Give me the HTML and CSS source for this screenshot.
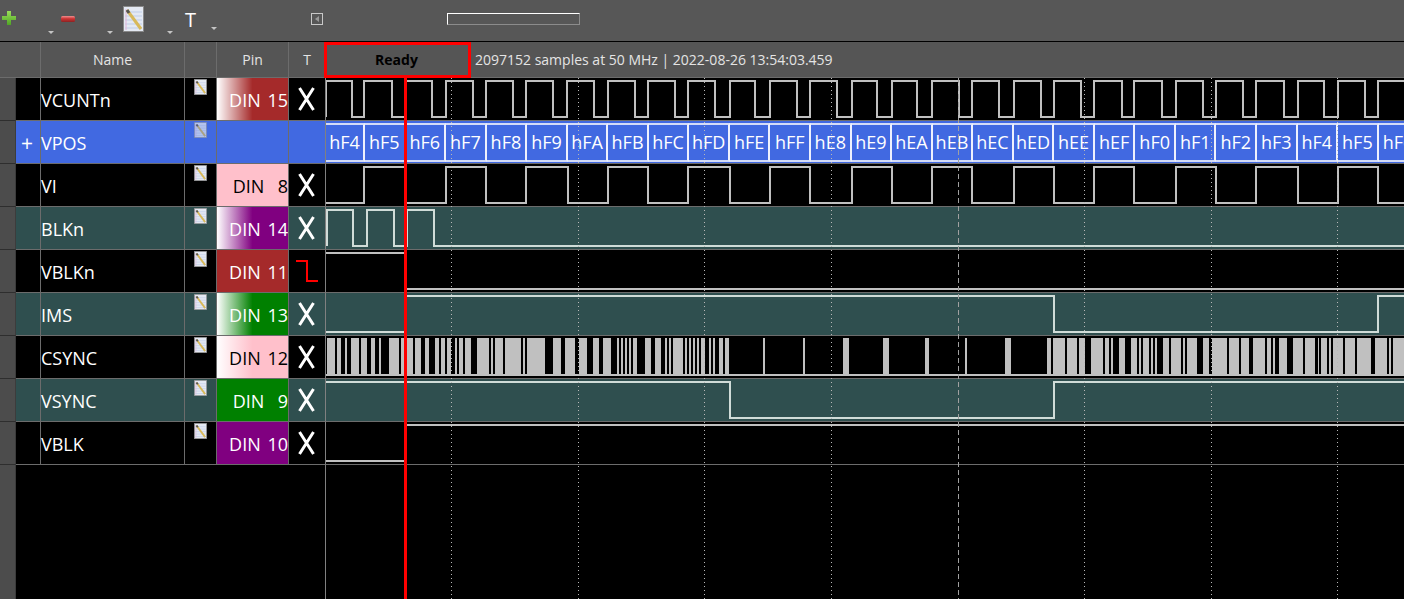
FILE: index.html
```html
<!DOCTYPE html>
<html lang="en">

<head>
    <meta charset="UTF-8">
    <meta name="viewport" content="width=device-width, initial-scale=1.0">
    <title>Logic analyzer</title>
    <link rel="stylesheet" href="styles.css">
</head>

<body>

    <svg class="defs" aria-hidden="true">
        <symbol id="note" viewBox="0 0 21 26">
            <rect x="0.5" y="0.5" width="20" height="25" fill="#e4e9f3" stroke="#8a8a8a" />
            <path d="M2 6H19M2 10H19M2 14H19M2 18H19M2 22H19" stroke="#bfcde8" />
            <path d="M3 3V24" stroke="#e2b6d8" />
            <path d="M4 4L18 23" stroke="#d8b95a" stroke-width="3" />
            <path d="M4 4L6 7" stroke="#555" stroke-width="3" />
        </symbol>
        <symbol id="any" viewBox="0 0 17 24">
            <path d="M1.5 1L15.5 23M15.5 1L1.5 23" fill="none" stroke="#fff" stroke-width="3" />
        </symbol>
        <linearGradient id="add-fill" x1="0" y1="0" x2="0" y2="1">
            <stop offset="0" stop-color="#9adf5a" />
            <stop offset="1" stop-color="#4fa524" />
        </linearGradient>
        <linearGradient id="del-fill" x1="0" y1="0" x2="0" y2="1">
            <stop offset="0" stop-color="#ee9090" />
            <stop offset="0.45" stop-color="#cc3434" />
            <stop offset="1" stop-color="#8c2222" />
        </linearGradient>
    </svg>

    <!-- barra de herramientas -->
    <div class="toolbar">
        <div class="tool tool-add">
            <svg class="icon-add" viewBox="0 0 14 14">
                <path d="M5 0H9V5H14V9H9V14H5V9H0V5H5Z" fill="url(#add-fill)" />
            </svg>
            <span class="caret"></span>
        </div>
        <div class="tool tool-del">
            <svg class="icon-del" viewBox="0 0 14 6">
                <rect width="14" height="6" rx="1.5" fill="url(#del-fill)" />
            </svg>
            <span class="caret"></span>
        </div>
        <div class="tool tool-note">
            <svg class="icon-note">
                <use href="#note" />
            </svg>
            <span class="caret"></span>
        </div>
        <div class="tool tool-text">
            <span class="icon-text">T</span>
            <span class="caret"></span>
        </div>
        <svg class="icon-back" viewBox="0 0 12 12">
            <rect x="0.5" y="0.5" width="11" height="11" fill="none" stroke="#c8c8c8" />
            <path d="M4 6L8 3V9Z" fill="#9a9a9a" />
        </svg>
        <div class="progress"></div>
    </div>

    <!-- cabecera -->
    <div class="row header">
        <div></div>
        <div></div>
        <div class="cell">Name</div>
        <div class="cell"></div>
        <div class="cell">Pin</div>
        <div class="cell">T</div>
        <div class="status">
            <div class="ready">Ready</div>
            <div class="info">2097152 samples at 50 MHz | 2022-08-26 13:54:03.459</div>
        </div>
    </div>

    <div class="tracks">

        <div class="row">
            <div class="strip"></div>
            <div></div>
            <div class="name">VCUNTn</div>
            <div class="note"><svg class="icon-small"><use href="#note" /></svg></div>
            <div class="pin fade-brown">DIN 15</div>
            <div class="trig"><svg class="icon-any"><use href="#any" /></svg></div>
            <div class="wave">
                <svg viewBox="326 0 1078 42">
                    <path d="M326 39V3H352V39H364V3H392V39H405V3H432V39H446V3H473V39H486V3H513V39H526V3H553V39H567V3H594V39H608V3H635V39H648V3H675V39H688V3H715V39H730V3H755V39H770V3H797V39H810V3H837V39H852V3H877V39H892V3H917V39H932V3H959V39H972V3H999V39H1014V3H1041V39H1054V3H1081V39H1094V3H1122V39H1134V3H1162V39H1176V3H1203V39H1216V3H1243V39H1256V3H1284V39H1298V3H1324V39H1338V3H1365V39H1378V3H1406" />
                </svg>
            </div>
        </div>

        <div class="row blue">
            <div class="strip"></div>
            <div class="expand">+</div>
            <div class="name">VPOS</div>
            <div class="note"><svg class="icon-small tinted"><use href="#note" /></svg></div>
            <div class="pin"></div>
            <div class="trig"></div>
            <div class="wave bus">
                <span class="word first">hF4</span>
                <span class="word">hF5</span>
                <span class="word">hF6</span>
                <span class="word">hF7</span>
                <span class="word">hF8</span>
                <span class="word">hF9</span>
                <span class="word">hFA</span>
                <span class="word">hFB</span>
                <span class="word">hFC</span>
                <span class="word">hFD</span>
                <span class="word">hFE</span>
                <span class="word">hFF</span>
                <span class="word">hE8</span>
                <span class="word">hE9</span>
                <span class="word">hEA</span>
                <span class="word">hEB</span>
                <span class="word">hEC</span>
                <span class="word">hED</span>
                <span class="word">hEE</span>
                <span class="word">hEF</span>
                <span class="word">hF0</span>
                <span class="word">hF1</span>
                <span class="word">hF2</span>
                <span class="word">hF3</span>
                <span class="word">hF4</span>
                <span class="word">hF5</span>
                <span class="word">hF6</span>
            </div>
        </div>

        <div class="row">
            <div class="strip"></div>
            <div></div>
            <div class="name">VI</div>
            <div class="note"><svg class="icon-small"><use href="#note" /></svg></div>
            <div class="pin solid-pink">DIN  8</div>
            <div class="trig"><svg class="icon-any"><use href="#any" /></svg></div>
            <div class="wave">
                <svg viewBox="326 0 1078 42">
                    <path d="M326 39H364V3H405V39H446V3H486V39H526V3H568V39H608V3H648V39H688V3H730V39H770V3H810V39H852V3H892V39H932V3H972V39H1014V3H1054V39H1094V3H1134V39H1176V3H1216V39H1256V3H1298V39H1338V3H1378V39H1406" />
                </svg>
            </div>
        </div>

        <div class="row teal">
            <div class="strip"></div>
            <div></div>
            <div class="name">BLKn</div>
            <div class="note"><svg class="icon-small"><use href="#note" /></svg></div>
            <div class="pin fade-purple">DIN 14</div>
            <div class="trig"><svg class="icon-any"><use href="#any" /></svg></div>
            <div class="wave">
                <svg viewBox="326 0 1078 42">
                    <path d="M327 39V3H353V39H367V3H394V39H407V3H434V39H1406" />
                </svg>
            </div>
        </div>

        <div class="row">
            <div class="strip"></div>
            <div></div>
            <div class="name">VBLKn</div>
            <div class="note"><svg class="icon-small"><use href="#note" /></svg></div>
            <div class="pin solid-brown">DIN 11</div>
            <div class="trig">
                <svg class="icon-fall" viewBox="0 0 22 22">
                    <path d="M0 1H11V21H22" fill="none" stroke="#f00" stroke-width="2" />
                </svg>
            </div>
            <div class="wave">
                <svg viewBox="326 0 1078 42">
                    <path d="M326 3H406V39H1406" />
                </svg>
            </div>
        </div>

        <div class="row teal">
            <div class="strip"></div>
            <div></div>
            <div class="name">IMS</div>
            <div class="note"><svg class="icon-small"><use href="#note" /></svg></div>
            <div class="pin fade-green">DIN 13</div>
            <div class="trig"><svg class="icon-any"><use href="#any" /></svg></div>
            <div class="wave">
                <svg viewBox="326 0 1078 42">
                    <path d="M326 39H406V3H1054V39H1378V3H1406" />
                </svg>
            </div>
        </div>

        <div class="row">
            <div class="strip"></div>
            <div></div>
            <div class="name">CSYNC</div>
            <div class="note"><svg class="icon-small"><use href="#note" /></svg></div>
            <div class="pin fade-pink">DIN 12</div>
            <div class="trig"><svg class="icon-any"><use href="#any" /></svg></div>
            <div class="wave">
                <svg viewBox="326 0 1078 42">
                    <path class="bars" d="M326 38H1404V40H326ZM327 2H335V40H327ZM337 2H341V40H337ZM345 2H347V40H345ZM351 2H359V40H351ZM361 2H367V40H361ZM371 2H375V40H371ZM379 2H381V40H379ZM389 2H399V40H389ZM401 2H404V40H401ZM407 2H413V40H407ZM415 2H421V40H415ZM425 2H429V40H425ZM435 2H439V40H435ZM441 2H445V40H441ZM447 2H451V40H447ZM455 2H457V40H455ZM459 2H463V40H459ZM465 2H471V40H465ZM477 2H489V40H477ZM491 2H493V40H491ZM495 2H503V40H495ZM505 2H521V40H505ZM523 2H525V40H523ZM527 2H545V40H527ZM553 2H561V40H553ZM565 2H575V40H565ZM579 2H587V40H579ZM593 2H599V40H593ZM603 2H611V40H603ZM617 2H619V40H617ZM621 2H623V40H621ZM625 2H627V40H625ZM629 2H631V40H629ZM633 2H637V40H633ZM645 2H651V40H645ZM655 2H661V40H655ZM665 2H667V40H665ZM669 2H671V40H669ZM673 2H683V40H673ZM685 2H687V40H685ZM689 2H691V40H689ZM693 2H695V40H693ZM697 2H699V40H697ZM701 2H705V40H701ZM709 2H711V40H709ZM713 2H715V40H713ZM719 2H723V40H719ZM725 2H729V40H725ZM763 2H765V40H763ZM803 2H805V40H803ZM843 2H849V40H843ZM883 2H889V40H883ZM925 2H929V40H925ZM965 2H967V40H965ZM1005 2H1011V40H1005ZM1047 2H1051V40H1047ZM1053 2H1065V40H1053ZM1067 2H1077V40H1067ZM1079 2H1085V40H1079ZM1091 2H1103V40H1091ZM1105 2H1109V40H1105ZM1111 2H1113V40H1111ZM1119 2H1125V40H1119ZM1131 2H1137V40H1131ZM1139 2H1141V40H1139ZM1143 2H1149V40H1143ZM1151 2H1153V40H1151ZM1155 2H1157V40H1155ZM1163 2H1169V40H1163ZM1171 2H1181V40H1171ZM1183 2H1185V40H1183ZM1187 2H1197V40H1187ZM1203 2H1209V40H1203ZM1212 2H1227V40H1212ZM1229 2H1239V40H1229ZM1241 2H1249V40H1241ZM1253 2H1265V40H1253ZM1267 2H1271V40H1267ZM1273 2H1275V40H1273ZM1279 2H1287V40H1279ZM1293 2H1303V40H1293ZM1305 2H1315V40H1305ZM1318 2H1319V40H1318ZM1321 2H1327V40H1321ZM1329 2H1331V40H1329ZM1333 2H1343V40H1333ZM1345 2H1355V40H1345ZM1357 2H1371V40H1357ZM1375 2H1387V40H1375ZM1389 2H1391V40H1389ZM1393 2H1404V40H1393Z" />
                </svg>
            </div>
        </div>

        <div class="row teal">
            <div class="strip"></div>
            <div></div>
            <div class="name">VSYNC</div>
            <div class="note"><svg class="icon-small"><use href="#note" /></svg></div>
            <div class="pin solid-green">DIN  9</div>
            <div class="trig"><svg class="icon-any"><use href="#any" /></svg></div>
            <div class="wave">
                <svg viewBox="326 0 1078 42">
                    <path d="M326 3H730V39H1054V3H1406" />
                </svg>
            </div>
        </div>

        <div class="row">
            <div class="strip"></div>
            <div></div>
            <div class="name">VBLK</div>
            <div class="note"><svg class="icon-small"><use href="#note" /></svg></div>
            <div class="pin solid-purple">DIN 10</div>
            <div class="trig"><svg class="icon-any"><use href="#any" /></svg></div>
            <div class="wave">
                <svg viewBox="326 0 1078 42">
                    <path d="M326 39H406V3H1406" />
                </svg>
            </div>
        </div>

        <div class="row filler">
            <div class="strip"></div>
            <div class="blank"></div>
            <div class="wave"></div>
        </div>

        <!-- reglas de tiempo y cursor, encima de las señales -->
        <svg class="rulers">
            <path class="tick" d="M125.5 0V521M252.5 0V521M378.5 0V521M505.5 0V521M758.5 0V521M885.5 0V521M1011.5 0V521" />
            <path class="tick major" d="M632.5 0V521" />
        </svg>
        <div class="cursor"></div>
    </div>

</body>

</html>
```

FILE: styles.css
```css
* {
    box-sizing: border-box;
}

html,
body {
    height: 100%;
}

body {
    margin: 0;
    display: flex;
    flex-direction: column;
    overflow: hidden;
    background-color: #000;
    color: #fff;
    font-family: "Open Sans", "Liberation Sans", sans-serif;
}

.defs {
    position: absolute;
    width: 0;
    height: 0;
}

/* barra de herramientas */
.toolbar {
    flex: 0 0 42px;
    display: flex;
    align-items: flex-start;
    padding-left: 2px;
    background-color: #575757;
    border-bottom: 1px solid #000;
}

.tool {
    display: flex;
    align-items: flex-start;
}

.tool-add {
    width: 59px;
}

.tool-del {
    width: 62px;
}

.tool-note {
    width: 62px;
}

.tool-text {
    width: 126px;
}

.caret {
    width: 0;
    height: 0;
    margin-top: 31px;
    border-top: 3px solid #c4c4c4;
    border-left: 3px solid transparent;
    border-right: 3px solid transparent;
}

.icon-add {
    width: 14px;
    height: 14px;
    margin-top: 11px;
}

.tool-add .caret {
    margin-left: 32px;
}

.icon-del {
    width: 14px;
    height: 6px;
    margin-top: 16px;
}

.tool-del .caret {
    margin-left: 32px;
}

.icon-note {
    width: 21px;
    height: 26px;
    margin-top: 6px;
}

.tool-note .caret {
    margin-left: 23px;
}

.icon-text {
    width: 12px;
    margin-top: 6px;
    font-size: 20px;
    line-height: 27px;
}

.tool-text .caret {
    margin-top: 27px;
    margin-left: 14px;
}

.icon-back {
    width: 12px;
    height: 12px;
    margin-top: 13px;
}

.progress {
    width: 133px;
    height: 12px;
    margin-top: 13px;
    margin-left: 124px;
    border: 1px solid #8c8c8c;
    border-top-color: #fff;
    border-left-color: #fff;
}

/* filas */
.row {
    display: grid;
    grid-template-columns: 16px 24px 144px 32px 72px 37px 1fr;
    grid-template-rows: 43px;
    flex: 0 0 43px;
    height: 43px;
}

.row > * {
    border-bottom: 1px solid #6c6c6c;
}

.strip {
    background-color: #4c4c4c;
    border-right: 1px solid #3c3c3c;
}

.row > .strip {
    border-bottom-color: #2e2e2e;
}

.header {
    grid-template-rows: 36px;
    flex: 0 0 36px;
    height: 36px;
    background-color: #555;
    font-size: 14px;
    color: #e4e4e4;
}

.cell {
    display: flex;
    align-items: center;
    justify-content: center;
    border-left: 1px solid #6c6c6c;
}

.status {
    display: flex;
    align-items: flex-start;
    border-left: 1px solid #6c6c6c;
}

.ready {
    flex: 0 0 147px;
    height: 36px;
    margin-left: -2px;
    padding-right: 2px;
    border: 3px solid #f00;
    font-size: 14px;
    font-weight: 700;
    line-height: 30px;
    text-align: center;
    color: #000;
}

.info {
    margin-left: 4px;
    line-height: 36px;
    white-space: nowrap;
}

.tracks {
    position: relative;
    flex: 1;
    display: flex;
    flex-direction: column;
    min-height: 0;
    font-size: 18px;
}

.teal {
    background-color: #2f4f4f;
}

.blue {
    background-color: #4169e1;
}

.expand {
    padding-left: 5px;
    padding-top: 2px;
    font-size: 21px;
    line-height: 40px;
    text-align: left;
}

.name {
    padding-top: 2px;
    border-left: 1px solid #6c6c6c;
    line-height: 40px;
}

.note {
    padding-left: 9px;
    padding-top: 1px;
    border-left: 1px solid #6c6c6c;
}

.icon-small {
    display: block;
    width: 13px;
    height: 16px;
}

.tinted {
    opacity: 0.7;
}

.pin {
    padding-top: 2px;
    border-left: 1px solid #6c6c6c;
    line-height: 40px;
    text-align: right;
    white-space: pre;
    word-spacing: 2px;
}

.fade-brown {
    background: linear-gradient(90deg, #fff, #a52a2a 50%);
}

.fade-purple {
    background: linear-gradient(90deg, #fff, #800080 50%);
}

.fade-green {
    background: linear-gradient(90deg, #fff, #008000 50%);
}

.fade-pink {
    background: linear-gradient(90deg, #fff, #ffc0cb 50%);
    color: #000;
}

.solid-pink {
    background-color: #ffc0cb;
    color: #000;
}

.solid-brown {
    background-color: #a52a2a;
}

.solid-green {
    background-color: #008000;
}

.solid-purple {
    background-color: #800080;
}

.trig {
    display: flex;
    align-items: center;
    justify-content: center;
    padding-right: 1px;
    border-left: 1px solid #6c6c6c;
}

.icon-any {
    width: 17px;
    height: 24px;
}

.icon-fall {
    width: 22px;
    height: 22px;
}

/* señales */
.wave {
    min-width: 0;
    overflow: hidden;
    border-left: 1px solid #808080;
}

.wave svg {
    display: block;
    width: 1078px;
    height: 42px;
}

.wave path {
    fill: none;
    stroke: #c0c0c0;
    stroke-width: 2;
}

.teal .wave path {
    stroke: #d0dcd8;
}

.wave .bars {
    fill: #c0c0c0;
    stroke: none;
}

.bus {
    display: flex;
    align-items: stretch;
    height: 43px;
    padding-top: 2px;
    padding-bottom: 1px;
}

.word {
    flex: 0 0 40.56px;
    border-top: 2px solid #d4dcf8;
    border-bottom: 2px solid #d4dcf8;
    border-right: 2px solid #eef1fd;
    line-height: 35px;
    text-align: center;
    white-space: nowrap;
}

.first {
    flex-basis: 39px;
}

.filler {
    flex: 1;
    grid-template-columns: 16px 309px 1fr;
    grid-template-rows: 1fr;
    height: auto;
}

.filler > * {
    border-bottom: 0;
}

.rulers {
    position: absolute;
    left: 326px;
    top: 0;
    width: 1078px;
    height: 521px;
}

.tick {
    fill: none;
    stroke: #b8b8b8;
    stroke-dasharray: 1 3;
}

.major {
    stroke: #a0a0a0;
    stroke-dasharray: 5 3;
}

.cursor {
    position: absolute;
    left: 404px;
    top: 0;
    bottom: 0;
    width: 3px;
    background-color: #f00;
}
```
